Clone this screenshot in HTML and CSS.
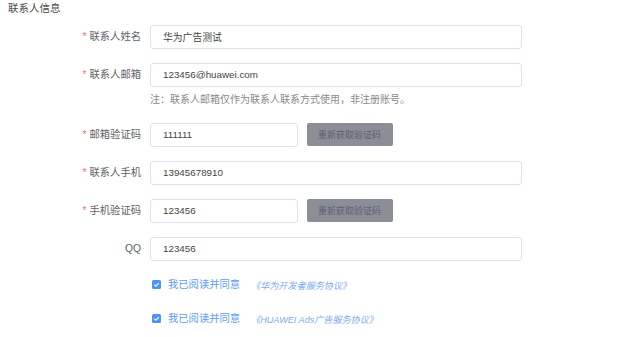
FILE: index.html
```html
<!DOCTYPE html>
<html lang="zh-CN">
<head>
    <meta charset="UTF-8">
    <title>联系人信息</title>
    <link rel="stylesheet" href="styles.css">
</head>
<body>
    <div class="section">
        <!-- Section heading -->
        <div class="section-title">联系人信息</div>

        <form class="contact-form">
            <div class="form-row">
                <label class="form-label required">联系人姓名</label>
                <input class="form-input" type="text" value="华为广告测试">
            </div>

            <div class="form-row has-note">
                <div class="form-line">
                    <label class="form-label required">联系人邮箱</label>
                    <input class="form-input" type="text" value="123456@huawei.com">
                </div>
                <div class="form-note">注：联系人邮箱仅作为联系人联系方式使用，非注册账号。</div>
            </div>

            <div class="form-row">
                <label class="form-label required">邮箱验证码</label>
                <input class="form-input short" type="text" value="111111">
                <button type="button" class="code-button">重新获取验证码</button>
            </div>

            <div class="form-row">
                <label class="form-label required">联系人手机</label>
                <input class="form-input" type="text" value="13945678910">
            </div>

            <div class="form-row">
                <label class="form-label required">手机验证码</label>
                <input class="form-input short" type="text" value="123456">
                <button type="button" class="code-button">重新获取验证码</button>
            </div>

            <div class="form-row">
                <label class="form-label">QQ</label>
                <input class="form-input" type="text" value="123456">
            </div>

            <!-- Agreement checkboxes -->
            <div class="agree-row">
                <span class="check-box">
                    <svg viewBox="0 0 10 10" width="9" height="9"><path d="M2.4 5.1 L4.3 6.9 L7.6 3.4" fill="none" stroke="#fff" stroke-width="1.2"/></svg>
                </span>
                <span class="agree-text">我已阅读并同意</span>
                <a class="agree-link" href="#">《华为开发者服务协议》</a>
            </div>
            <div class="agree-row">
                <span class="check-box">
                    <svg viewBox="0 0 10 10" width="9" height="9"><path d="M2.4 5.1 L4.3 6.9 L7.6 3.4" fill="none" stroke="#fff" stroke-width="1.2"/></svg>
                </span>
                <span class="agree-text">我已阅读并同意</span>
                <a class="agree-link" href="#">《HUAWEI Ads广告服务协议》</a>
            </div>
        </form>
    </div>
</body>
</html>
```

FILE: styles.css
```css
/* Page basics */
body {
    margin: 0;
    background: #fff;
    font-family: "Liberation Sans", "Noto Sans CJK SC", sans-serif;
    color: #333;
}

.section {
    padding: 0 0 0 8px;
}

.section-title {
    font-size: 10.5px;
    line-height: 16px;
    color: #4a4a4a;
    margin-bottom: 8.5px;
}

/* Form rows */
.contact-form {
    margin: 0 0 0 -8px;
}

.form-row {
    display: flex;
    align-items: center;
    margin-bottom: 14px;
}

.form-row.has-note {
    display: block;
}

.form-line {
    display: flex;
    align-items: center;
}

.form-label {
    width: 141px;
    margin-right: 9px;
    text-align: right;
    font-size: 10.3px;
    line-height: 16px;
    color: #5e6269;
}

.form-label.required::before {
    content: "*";
    color: #f07070;
    margin-right: 3px;
}

.form-input {
    box-sizing: border-box;
    width: 372px;
    height: 24px;
    margin: 0;
    padding: 0 0 0 12px;
    border: 1px solid #dfe1e8;
    border-radius: 3px;
    font-family: "Liberation Sans", "Noto Sans CJK SC", sans-serif;
    font-size: 9.8px;
    color: #444;
    background: #fff;
    outline: none;
}

.form-input.short {
    width: 148px;
}

.form-note {
    margin: 4px 0 0 150px;
    font-size: 10px;
    line-height: 18px;
    color: #8a8a8a;
}

/* Grey resend button */
.code-button {
    margin-left: 8.5px;
    width: 86px;
    height: 23px;
    padding: 0;
    border: none;
    border-radius: 2px;
    background: #8b8e97;
    color: #5d6067;
    font-family: "Liberation Sans", "Noto Sans CJK SC", sans-serif;
    font-size: 9px;
    cursor: pointer;
}

/* Agreement lines */
.agree-row {
    display: flex;
    align-items: center;
    height: 20px;
    margin-bottom: 14px;
    padding-left: 151.5px;
}

.check-box {
    display: flex;
    width: 9px;
    height: 9px;
    border-radius: 1.5px;
    background: #4c93f5;
    margin-right: 7.5px;
}

.agree-text {
    font-size: 10.3px;
    line-height: 16px;
    color: #5b9cf6;
    margin-right: 11px;
}

.agree-link {
    font-size: 9.1px;
    font-style: italic;
    color: #7eaaf0;
    text-decoration: none;
}
```
